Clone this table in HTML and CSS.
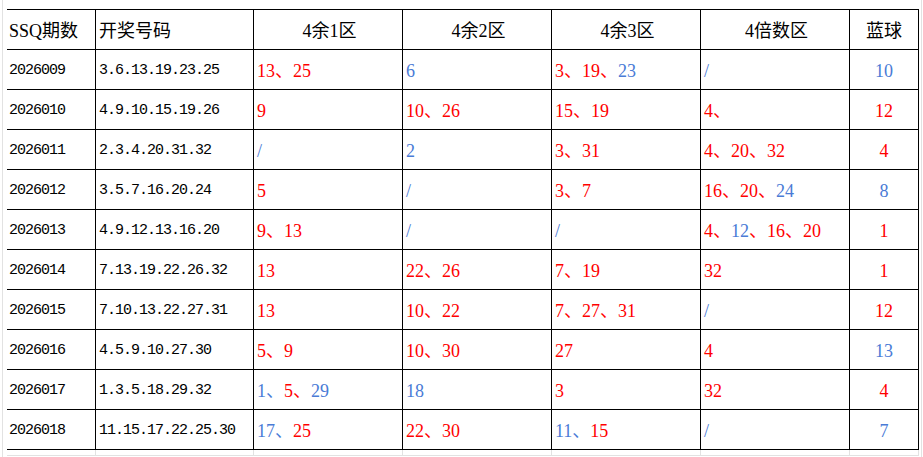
FILE: index.html
```html
<!DOCTYPE html>
<html lang="zh-CN">
<head>
<meta charset="utf-8">
<title>SSQ</title>
<link rel="stylesheet" href="styles.css">
</head>
<body>
<div class="sheet">
<table class="grid">
<thead>
<tr>
<th class="c1 lft">SSQ期数</th>
<th class="c2 lft">开奖号码</th>
<th class="cz">4余1区</th>
<th class="cz">4余2区</th>
<th class="cz">4余3区</th>
<th class="cz">4倍数区</th>
<th class="c7">蓝球</th>
</tr>
</thead>
<tbody>
<tr>
<td class="c1 mono">2026009</td><td class="c2 mono">3.6.13.19.23.25</td>
<td class="num"><span class="r">13、25</span></td>
<td class="num"><span class="b">6</span></td>
<td class="num"><span class="r">3、19、</span><span class="b">23</span></td>
<td class="num"><span class="b">/</span></td>
<td class="num ctr"><span class="b">10</span></td>
</tr>
<tr>
<td class="c1 mono">2026010</td><td class="c2 mono">4.9.10.15.19.26</td>
<td class="num"><span class="r">9</span></td>
<td class="num"><span class="r">10、26</span></td>
<td class="num"><span class="r">15、19</span></td>
<td class="num"><span class="r">4、</span></td>
<td class="num ctr"><span class="r">12</span></td>
</tr>
<tr>
<td class="c1 mono">2026011</td><td class="c2 mono">2.3.4.20.31.32</td>
<td class="num"><span class="b">/</span></td>
<td class="num"><span class="b">2</span></td>
<td class="num"><span class="r">3、31</span></td>
<td class="num"><span class="r">4、20、32</span></td>
<td class="num ctr"><span class="r">4</span></td>
</tr>
<tr>
<td class="c1 mono">2026012</td><td class="c2 mono">3.5.7.16.20.24</td>
<td class="num"><span class="r">5</span></td>
<td class="num"><span class="b">/</span></td>
<td class="num"><span class="r">3、7</span></td>
<td class="num"><span class="r">16、20、</span><span class="b">24</span></td>
<td class="num ctr"><span class="b">8</span></td>
</tr>
<tr>
<td class="c1 mono">2026013</td><td class="c2 mono">4.9.12.13.16.20</td>
<td class="num"><span class="r">9、13</span></td>
<td class="num"><span class="b">/</span></td>
<td class="num"><span class="b">/</span></td>
<td class="num"><span class="r">4、</span><span class="b">12</span><span class="r">、16、20</span></td>
<td class="num ctr"><span class="r">1</span></td>
</tr>
<tr>
<td class="c1 mono">2026014</td><td class="c2 mono">7.13.19.22.26.32</td>
<td class="num"><span class="r">13</span></td>
<td class="num"><span class="r">22、26</span></td>
<td class="num"><span class="r">7、19</span></td>
<td class="num"><span class="r">32</span></td>
<td class="num ctr"><span class="r">1</span></td>
</tr>
<tr>
<td class="c1 mono">2026015</td><td class="c2 mono">7.10.13.22.27.31</td>
<td class="num"><span class="r">13</span></td>
<td class="num"><span class="r">10、22</span></td>
<td class="num"><span class="r">7、27、31</span></td>
<td class="num"><span class="b">/</span></td>
<td class="num ctr"><span class="r">12</span></td>
</tr>
<tr>
<td class="c1 mono">2026016</td><td class="c2 mono">4.5.9.10.27.30</td>
<td class="num"><span class="r">5、9</span></td>
<td class="num"><span class="r">10、30</span></td>
<td class="num"><span class="r">27</span></td>
<td class="num"><span class="r">4</span></td>
<td class="num ctr"><span class="b">13</span></td>
</tr>
<tr>
<td class="c1 mono">2026017</td><td class="c2 mono">1.3.5.18.29.32</td>
<td class="num"><span class="b">1、</span><span class="r">5、</span><span class="b">29</span></td>
<td class="num"><span class="b">18</span></td>
<td class="num"><span class="r">3</span></td>
<td class="num"><span class="r">32</span></td>
<td class="num ctr"><span class="r">4</span></td>
</tr>
<tr>
<td class="c1 mono">2026018</td><td class="c2 mono">11.15.17.22.25.30</td>
<td class="num"><span class="b">17、</span><span class="r">25</span></td>
<td class="num"><span class="r">22、30</span></td>
<td class="num"><span class="b">11、</span><span class="r">15</span></td>
<td class="num"><span class="b">/</span></td>
<td class="num ctr"><span class="b">7</span></td>
</tr>
<tr class="ghost">
<td></td><td></td><td></td><td></td><td></td><td></td><td></td>
</tr>
</tbody>
</table>
</div>
</body>
</html>
```
FILE: styles.css
```css
html, body {
  margin: 0;
  padding: 0;
  background: #ffffff;
}
.sheet {
  box-sizing: border-box;
  width: 920px;
  height: 457px;
  margin-left: 2px;
  border-left: 1px solid #e2e2e2;
  border-right: 1px solid #e2e2e2;
  padding-top: 9px;
  padding-left: 4px;
  overflow: hidden;
}
.grid {
  border-collapse: separate;
  border-spacing: 0;
  table-layout: fixed;
  width: 912px;
}
.grid th, .grid td {
  box-sizing: border-box;
  border-right: 1px solid #000;
  border-bottom: 1px solid #000;
  padding: 2px 0 0 3px;
  vertical-align: middle;
  white-space: nowrap;
  overflow: hidden;
  color: #000;
  line-height: 20px;
}
.grid th {
  height: 41px;
  border-top: 1px solid #000;
  font-family: "Liberation Serif", "Noto Sans CJK SC", serif;
  font-size: 18px;
  font-weight: normal;
  text-align: center;
}
.grid th.lft {
  text-align: left;
}
.grid th.c1 {
  padding-left: 2px;
}
.grid td {
  height: 40px;
}
.c1 { width: 89px; }
.c2 { width: 158px; }
.cz { width: 149px; }
.c7 { width: 69px; }
.grid th.c7 {
  padding-left: 0;
}
.mono {
  font-family: "Liberation Mono", monospace;
  font-size: 15px;
  letter-spacing: -1px;
}
.grid td.c1 {
  padding-left: 2px;
}
.grid td.c2 {
  padding-left: 3px;
}
.num {
  font-family: "Liberation Serif", "Noto Sans CJK SC", serif;
  font-size: 18px;
}
.grid td.ctr {
  text-align: center;
  padding-left: 0;
}
.r { color: #ff0000; }
.b { color: #4a7bd6; }
.grid tr.ghost td {
  height: 6px;
  padding: 0;
  line-height: 0;
  border-right: 1px solid #e2e2e2;
  border-bottom: 1px solid #e2e2e2;
}
```
